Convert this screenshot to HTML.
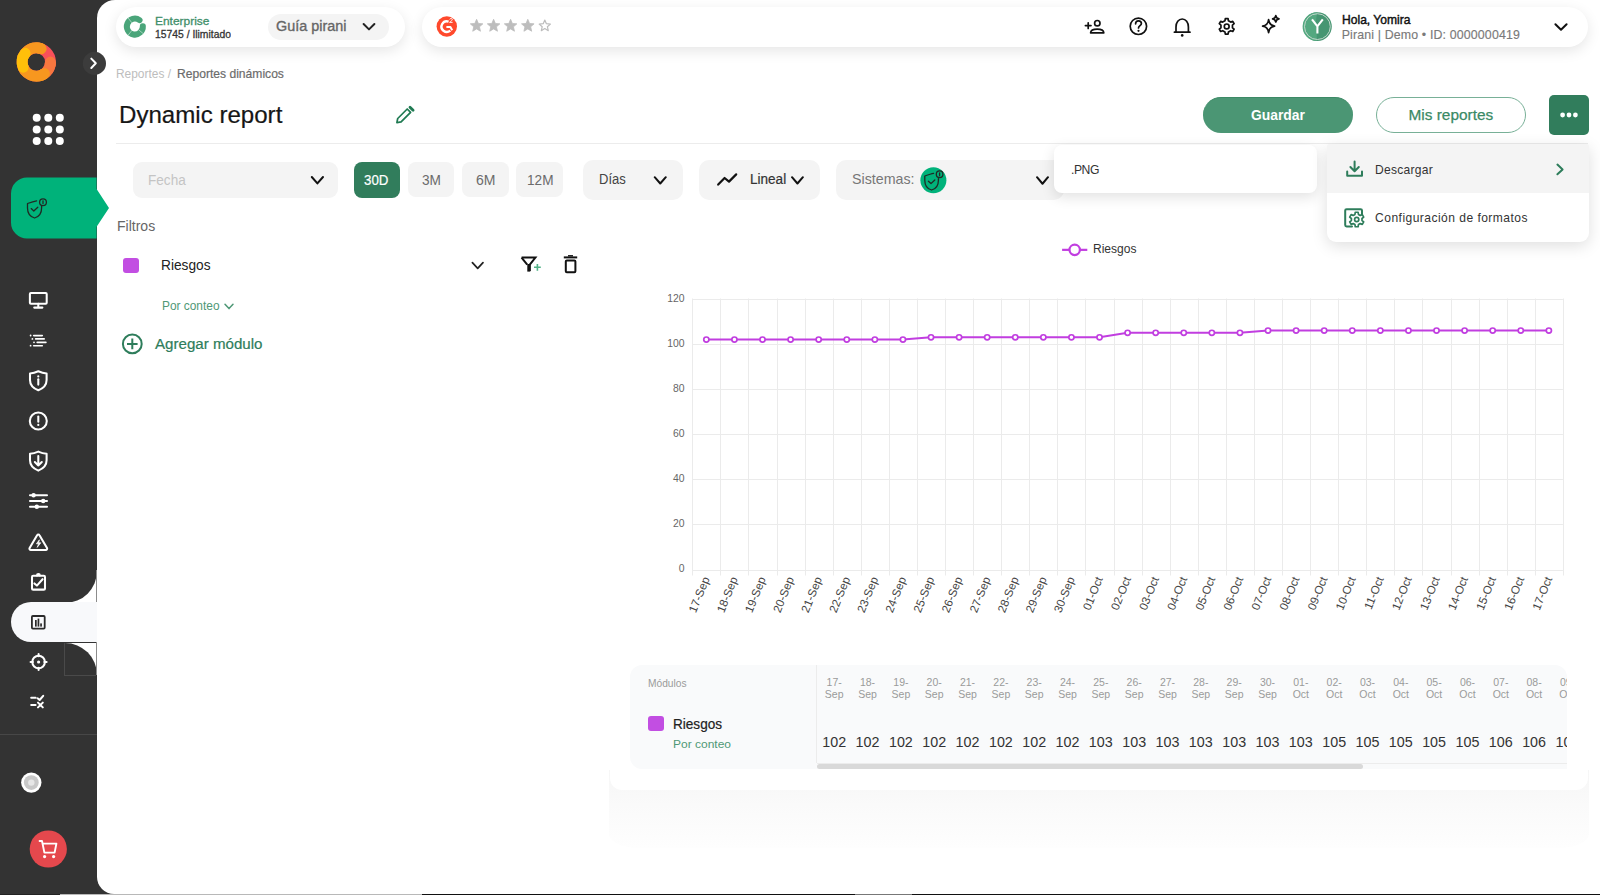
<!DOCTYPE html>
<html><head><meta charset="utf-8">
<style>
*{box-sizing:border-box;margin:0;padding:0}
html,body{width:1600px;height:895px;overflow:hidden;background:#333333;font-family:"Liberation Sans",sans-serif;position:relative}
.a{position:absolute}
.t{position:absolute;white-space:nowrap;transform-origin:0 50%}
svg{position:absolute;overflow:visible}
</style></head><body>
<div class="a" style="left:0;top:0;width:97px;height:895px;background:#333333"></div>
<div class="a" style="left:97px;top:0;width:1503px;height:894px;background:#fff;border-radius:18px 0 0 17px"></div>
<div class="a" style="left:0;top:894px;width:60px;height:1px;background:#222"></div>
<div class="a" style="left:60px;top:894px;width:362px;height:1px;background:#b8b8b8"></div>
<div class="a" style="left:422px;top:894px;width:1178px;height:1px;background:#111"></div>
<div class="a" style="left:855px;top:894px;width:57px;height:1px;background:#777"></div>
<svg style="left:0;top:0" width="97" height="160">
<circle cx="36.3" cy="62" r="14.15" fill="none" stroke="#f9505a" stroke-width="10.9"/>
<path d="M50.45 62.00 A14.15 14.15 0 0 1 41.14 75.30" fill="none" stroke="#f8773f" stroke-width="10.9" stroke-linecap="butt"/>
<path d="M50.45 62.00 A14.15 14.15 0 0 1 50.24 64.46" fill="none" stroke="#f8773f" stroke-width="10.9" stroke-linecap="round"/>
<path d="M44.42 73.59 A14.15 14.15 0 1 1 41.14 48.70" fill="none" stroke="#f7971f" stroke-width="10.9" stroke-linecap="butt"/>
<path d="M44.42 73.59 A14.15 14.15 0 0 1 41.14 75.30" fill="none" stroke="#f7971f" stroke-width="10.9" stroke-linecap="round"/>
<path d="M37.53 47.90 A14.15 14.15 0 0 1 41.14 48.70" fill="none" stroke="#f7971f" stroke-width="10.9" stroke-linecap="round"/>
<path d="M23.18 67.30 A14.15 14.15 0 0 1 25.15 53.29" fill="none" stroke="#ffbf0a" stroke-width="10.9" stroke-linecap="round"/>
</svg>
<svg style="left:0;top:0" width="97" height="160"><circle cx="36.7" cy="117.8" r="4" fill="#fff"/><circle cx="48.3" cy="117.8" r="4" fill="#fff"/><circle cx="59.8" cy="117.8" r="4" fill="#fff"/><circle cx="36.7" cy="129.4" r="4" fill="#fff"/><circle cx="48.3" cy="129.4" r="4" fill="#fff"/><circle cx="59.8" cy="129.4" r="4" fill="#fff"/><circle cx="36.7" cy="141" r="4" fill="#fff"/><circle cx="48.3" cy="141" r="4" fill="#fff"/><circle cx="59.8" cy="141" r="4" fill="#fff"/></svg>
<svg style="left:0;top:0" width="120" height="100">
<circle cx="94.4" cy="63.4" r="11.6" fill="#3c3c3c"/>
<path d="M91.3 58.6 L95.8 63.3 L91.3 68" fill="none" stroke="#fff" stroke-width="2" stroke-linecap="round" stroke-linejoin="round"/>
</svg>
<svg style="left:0;top:170px" width="120" height="80">
<path d="M27 7.6 H96.6 V19 L109 38 L96.6 56.8 V68.4 H27 A16 16 0 0 1 11 52.4 V23.6 A16 16 0 0 1 27 7.6 Z" fill="#00b27a"/>
<g fill="none" stroke="#1f2a24" stroke-width="1.3" stroke-linecap="round" stroke-linejoin="round">
<path d="M36.6 200.8 C34 201.2 31.5 202 27.5 203.5 V208 C27.5 213.5 30.5 216.8 34.6 218 C38.6 216.8 41.6 213.5 41.6 208 V205.8" transform="translate(0,-170)"/>
<path d="M31.2 208.6 L33.8 211 L37.8 207.3" transform="translate(0,-170)"/>
<circle cx="43" cy="32.2" r="3.4"/>
<path d="M43 30.8 V33.6"/>
</g>
</svg>
<svg style="left:0;top:0" width="97" height="895"><g fill="none" stroke="#fff" stroke-width="2.05" stroke-linecap="round" stroke-linejoin="round">
<rect x="29.9" y="292.9" width="16.8" height="10.8" rx="1"/>
<path d="M38.3 303.8 V307.6 M34.2 307.6 H42.4"/>
</g>
<g fill="#fff">
<rect x="32.9" y="334.7" width="10.2" height="1.7" rx=".8"/><rect x="34.8" y="338.1" width="10.2" height="1.7" rx=".8"/>
<rect x="36.4" y="341.5" width="10.3" height="1.7" rx=".8"/><rect x="32.9" y="344.9" width="10.2" height="1.7" rx=".8"/>
<circle cx="30.6" cy="335.5" r=".9"/><circle cx="32.4" cy="338.9" r=".9"/><circle cx="34" cy="342.3" r=".9"/><circle cx="30.6" cy="345.7" r=".9"/>
</g>
<g fill="none" stroke="#fff" stroke-width="2.05" stroke-linecap="round" stroke-linejoin="round">
<path d="M38.3 371.3 C35.5 372.5 32.8 373.2 30 373.4 V380 C30 385 33.2 388.3 38.3 390.3 C43.4 388.3 46.6 385 46.6 380 V373.4 C43.8 373.2 41.1 372.5 38.3 371.3 Z"/>
<path d="M38.3 379.2 V384.6"/>
</g>
<circle cx="38.3" cy="376.4" r="1.1" fill="#fff"/>
<g fill="none" stroke="#fff" stroke-width="2.05" stroke-linecap="round" stroke-linejoin="round">
<circle cx="38.3" cy="421" r="8.5"/>
<path d="M38.3 416.5 V421.8"/>
</g>
<circle cx="38.3" cy="424.9" r="1.1" fill="#fff"/>
<g fill="none" stroke="#fff" stroke-width="2.05" stroke-linecap="round" stroke-linejoin="round">
<path d="M38.3 451.6 C35.5 452.8 32.8 453.5 30 453.7 V460.3 C30 465.3 33.2 468.6 38.3 470.6 C43.4 468.6 46.6 465.3 46.6 460.3 V453.7 C43.8 453.5 41.1 452.8 38.3 451.6 Z"/>
<path d="M38.3 456 V465.5 M34.8 462 L38.3 465.5 L41.8 462"/>
</g>
<g fill="none" stroke="#fff" stroke-width="2.05" stroke-linecap="round" stroke-linejoin="round">
<path d="M30 495.3 H47 M30 501 H47 M30 506.7 H47"/>
</g>
<g fill="#fff"><circle cx="33.6" cy="495.3" r="2.2"/><circle cx="43.2" cy="501" r="2.2"/><circle cx="36.8" cy="506.7" r="2.2"/></g>
<g fill="none" stroke="#fff" stroke-width="2.05" stroke-linecap="round" stroke-linejoin="round">
<path d="M37.1 535.2 C37.6 534.3 39 534.3 39.5 535.2 L47 548 C47.5 548.9 46.9 550 45.8 550 H30.8 C29.7 550 29.1 548.9 29.6 548 Z"/>
</g>
<path d="M39.4 539.8 L36.4 543.8 H38.6 L37.2 547.4 L40.8 542.8 H38.6 Z" fill="#fff" stroke="#fff" stroke-width="0.7" stroke-linejoin="round"/>
<g fill="none" stroke="#fff" stroke-width="2.05" stroke-linecap="round" stroke-linejoin="round">
<rect x="32" y="575.8" width="13" height="13.8" rx="1.2"/>
<path d="M34.4 583.4 L36.9 585.6 L42.6 579.2"/>
<path d="M37 575.4 A1.4 1.4 0 0 1 39.8 575.4"/>
</g>
</svg>
<div class="a" style="left:64px;top:570px;width:33px;height:33px;background:#fff"></div>
<div class="a" style="left:64px;top:570px;width:33px;height:33px;background:#333;border-bottom-right-radius:32px"></div>
<div class="a" style="left:64px;top:643px;width:33px;height:33px;background:#fff"></div>
<div class="a" style="left:64px;top:643px;width:33px;height:33px;background:#333;border-top-right-radius:32px"></div>
<div class="a" style="left:11px;top:602.2px;width:86px;height:40.2px;background:#f8f9fb;border-radius:20.25px 0 0 20.25px"></div>
<div class="a" style="left:96px;top:570px;width:1px;height:32px;background:#8c8c8c"></div>
<div class="a" style="left:96px;top:642.4px;width:1px;height:33px;background:#8c8c8c"></div>
<div class="a" style="left:64px;top:643px;width:1px;height:32px;background:#4a4a4a"></div>
<div class="a" style="left:64px;top:674.5px;width:32px;height:1px;background:#4a4a4a"></div>
<svg style="left:0;top:0" width="97" height="895">
<g fill="none" stroke="#2a2a2a" stroke-width="1.8" stroke-linejoin="round">
<rect x="31.9" y="616" width="12.8" height="12.6" rx="1"/>
</g>
<g fill="#2a2a2a"><rect x="35" y="620" width="1.7" height="6.6"/><rect x="37.6" y="618.6" width="1.7" height="8"/><rect x="40.2" y="623.4" width="1.7" height="3.2"/></g>
<g fill="none" stroke="#fff" stroke-width="2.05" stroke-linecap="round" stroke-linejoin="round">
<circle cx="38.6" cy="662" r="6.3"/>
<path d="M38.6 654 V656.3 M38.6 667.7 V670 M30.6 662 H32.9 M44.3 662 H46.6"/>
</g>
<circle cx="38.6" cy="662" r="1.6" fill="#fff"/>
<g fill="none" stroke="#fff" stroke-width="2.05" stroke-linecap="round" stroke-linejoin="round">
<path d="M31.2 697.8 H35.6 M31.2 705 H35.6 M37.6 698.3 L39.6 700 L43.2 695.8 M38 702.6 L42.8 707.4 M42.8 702.6 L38 707.4"/>
</g>
<path d="M0 734.5 H97" stroke="#474747" stroke-width="1"/>
<circle cx="31.3" cy="782.6" r="10.2" fill="#fff"/>
<circle cx="31.3" cy="782.6" r="7.4" fill="#c8c8c8"/>
<circle cx="31.3" cy="782.6" r="3.2" fill="#e6e6e6"/>
<circle cx="48.3" cy="849" r="18.6" fill="#e5484d"/>
<g fill="none" stroke="#fff" stroke-width="1.9" stroke-linecap="round" stroke-linejoin="round">
<path d="M39.6 841 H42 L44.4 852.6 H54.6 L56.4 843.6 H43"/>
</g>
<circle cx="44.6" cy="856.6" r="1.6" fill="#fff"/><circle cx="53.6" cy="856.6" r="1.6" fill="#fff"/>
</svg>
<div class="a" style="left:116px;top:7px;width:289px;height:40px;background:#fff;border-radius:20px;box-shadow:0 4px 14px rgba(0,0,0,0.10)"></div>
<div class="a" style="left:422px;top:7px;width:1166px;height:40px;background:#fff;border-radius:20px;box-shadow:0 4px 14px rgba(0,0,0,0.10)"></div>
<svg style="left:0;top:0" width="200" height="60">
<path d="M142.84 26.18 A8.0 8.0 0 1 1 139.55 20.13" fill="none" stroke="#4aa57a" stroke-width="6" stroke-linecap="round"/>
<path d="M131.83 22.74 L128.02 17.85 M131.83 30.46 L128.02 35.35 M138.60 29.75 L143.35 33.73" stroke="#d8ece2" stroke-width="0.6"/>
</svg>
<div class="t" style="left:154.50px;top:14.75px;font-size:11.627906976744187px;line-height:11.627906976744187px;color:#3f8f6a;transform:scaleX(1.0283);-webkit-text-stroke:0.3px #3f8f6a;">Enterprise</div>
<div class="t" style="left:154.50px;top:28.84px;font-size:11.046511627906977px;line-height:11.046511627906977px;color:#333;transform:scaleX(0.9376);-webkit-text-stroke:0.3px #333;">15745 / Ilimitado</div>
<div class="a" style="left:268px;top:14px;width:121px;height:26px;background:#f4f4f4;border-radius:13px"></div>
<div class="t" style="left:276.00px;top:18.69px;font-size:14.534883720930234px;line-height:14.534883720930234px;color:#666;transform:scaleX(0.9915);-webkit-text-stroke:0.35px #666;">Guía pirani</div>
<svg style="left:0;top:0" width="400" height="60"><path d="M363.6 24 L369 29.4 L374.4 24" fill="none" stroke="#222" stroke-width="2" stroke-linecap="round" stroke-linejoin="round"/></svg>
<svg style="left:0;top:0" width="600" height="60">
<circle cx="446.8" cy="26.5" r="10.2" fill="#ff492c"/>
<path d="M448.6 21.6 A5.3 5.3 0 1 0 450.3 30.6" fill="none" stroke="#fff" stroke-width="2.4"/>
<path d="M446.4 26.9 H450.4 L452.2 30.2" fill="none" stroke="#fff" stroke-width="2" stroke-linejoin="round"/>
<path d="M449.6 19.4 C449.8 18.3 452.4 18.3 452.4 19.6 C452.4 20.6 450.2 21.2 449.6 22.4 H452.6" fill="none" stroke="#fff" stroke-width="0.9"/>
</svg>
<svg style="left:0;top:0" width="600" height="60"><path d="M476.60,19.30 L478.36,23.47 L482.88,23.86 L479.45,26.83 L480.48,31.24 L476.60,28.90 L472.72,31.24 L473.75,26.83 L470.32,23.86 L474.84,23.47 Z" fill="#bdbdbd" stroke="#bdbdbd" stroke-width="0.8" stroke-linejoin="round"/><path d="M493.60,19.30 L495.36,23.47 L499.88,23.86 L496.45,26.83 L497.48,31.24 L493.60,28.90 L489.72,31.24 L490.75,26.83 L487.32,23.86 L491.84,23.47 Z" fill="#bdbdbd" stroke="#bdbdbd" stroke-width="0.8" stroke-linejoin="round"/><path d="M510.60,19.30 L512.36,23.47 L516.88,23.86 L513.45,26.83 L514.48,31.24 L510.60,28.90 L506.72,31.24 L507.75,26.83 L504.32,23.86 L508.84,23.47 Z" fill="#bdbdbd" stroke="#bdbdbd" stroke-width="0.8" stroke-linejoin="round"/><path d="M527.80,19.30 L529.56,23.47 L534.08,23.86 L530.65,26.83 L531.68,31.24 L527.80,28.90 L523.92,31.24 L524.95,26.83 L521.52,23.86 L526.04,23.47 Z" fill="#bdbdbd" stroke="#bdbdbd" stroke-width="0.8" stroke-linejoin="round"/><path d="M544.80,20.00 L546.39,23.72 L550.41,24.08 L547.37,26.73 L548.27,30.67 L544.80,28.60 L541.33,30.67 L542.23,26.73 L539.19,24.08 L543.21,23.72 Z" fill="none" stroke="#bdbdbd" stroke-width="1.2" stroke-linejoin="round"/></svg>
<svg style="left:0;top:0" width="1600" height="60"><g fill="none" stroke="#111" stroke-width="1.7" stroke-linecap="round" stroke-linejoin="round">
<path d="M1085.4 25.6 H1091 M1088.2 22.8 V28.4"/>
<circle cx="1097.3" cy="23.2" r="2.7"/>
<path d="M1090.6 32.8 C1090.8 30.4 1093.6 29.2 1097.2 29.2 C1100.8 29.2 1103.6 30.4 1103.8 32.8 Z"/>
<circle cx="1138.4" cy="26.3" r="8.2"/>
<path d="M1135.6 23.8 C1135.6 21.8 1137 20.8 1138.5 20.8 C1140.2 20.8 1141.4 22 1141.4 23.5 C1141.4 25.6 1138.5 25.8 1138.5 28"/>
<path d="M1176 32.2 V27 C1176 22.4 1178.6 19 1182.2 19 C1185.8 19 1188.4 22.4 1188.4 27 V32.2 Z M1174.4 32.2 H1190"/>
</g>
<circle cx="1138.5" cy="30.8" r="1.1" fill="#111"/>
<circle cx="1182.2" cy="35.4" r="1.3" fill="#111"/>
<g fill="none" stroke="#111" stroke-width="1.7" stroke-linecap="round" stroke-linejoin="round">
<path d=""/>
</g>
</svg>
<svg style="left:0;top:0" width="1600" height="60"><g fill="none" stroke="#111" stroke-width="1.7" stroke-linecap="round" stroke-linejoin="round" stroke-width="1.9">
<path d="M1224.98,20.76 L1225.33,18.62 L1228.07,18.62 L1228.42,20.76 L1230.72,22.09 L1232.75,21.32 L1234.12,23.70 L1232.45,25.07 L1232.45,27.73 L1234.12,29.10 L1232.75,31.48 L1230.72,30.71 L1228.42,32.04 L1228.07,34.18 L1225.33,34.18 L1224.98,32.04 L1222.68,30.71 L1220.65,31.48 L1219.28,29.10 L1220.95,27.73 L1220.95,25.07 L1219.28,23.70 L1220.65,21.32 L1222.68,22.09 Z"/>
<circle cx="1226.7" cy="26.4" r="2.4"/>
<path d="M1268.6 19.5 Q1269.1999999999998 25.44 1274.6 26.1 Q1269.1999999999998 26.76 1268.6 32.7 Q1268.0 26.76 1262.6 26.1 Q1268.0 25.44 1268.6 19.5 Z"/>
<path d="M1275.8 15.600000000000001 Q1276.28 18.32 1279.0 18.8 Q1276.28 19.28 1275.8 22.0 Q1275.32 19.28 1272.6 18.8 Q1275.32 18.32 1275.8 15.600000000000001 Z"/>
</g></svg>
<svg style="left:0;top:0" width="1600" height="60">
<circle cx="1317.4" cy="26.6" r="14.4" fill="#469672"/>
<path d="M1317.4 12.2 C1316 18 1315.4 24 1316.4 30 C1316.8 34 1317 38 1316.6 41 A14.4 14.4 0 0 1 1317.4 12.2 Z" fill="#54a880"/>
<circle cx="1317.4" cy="26.6" r="12.9" fill="none" stroke="#cfdcd5" stroke-width="0.9"/>
<path d="M1312 19.4 L1317.4 26.4 L1322.8 19.4 M1317.4 26.4 V33.5" fill="none" stroke="#fff" stroke-width="2.1"/>
</svg>
<div class="t" style="left:1341.70px;top:13.67px;font-size:12.790697674418606px;line-height:12.790697674418606px;color:#111;transform:scaleX(0.9457);-webkit-text-stroke:0.45px #111;">Hola, Yomira</div>
<div class="t" style="left:1341.70px;top:29.34px;font-size:12.354651162790699px;line-height:12.354651162790699px;color:#7a7a7a;letter-spacing:0.157px;-webkit-text-stroke:0.15px #7a7a7a;">Pirani | Demo • ID: 0000000419</div>
<svg style="left:0;top:0" width="1600" height="60"><path d="M1555.4 24.2 L1561 29.8 L1566.6 24.2" fill="none" stroke="#111" stroke-width="2" stroke-linecap="round" stroke-linejoin="round"/></svg>
<div class="t" style="left:116.00px;top:68.27px;font-size:12.790697674418606px;line-height:12.790697674418606px;color:#bdbdbd;transform:scaleX(0.9321);">Reportes /</div>
<div class="t" style="left:177.00px;top:68.27px;font-size:12.790697674418606px;line-height:12.790697674418606px;color:#6b6b6b;transform:scaleX(0.9466);-webkit-text-stroke:0.2px #6b6b6b;">Reportes dinámicos</div>
<div class="t" style="left:119.00px;top:102.81px;font-size:23.837209302325583px;line-height:23.837209302325583px;color:#161616;transform:scaleX(1.0110);-webkit-text-stroke:0.2px #161616;">Dynamic report</div>
<svg style="left:0;top:0" width="1600" height="200">
<path d="M396.9 122.7 L397.7 118.5 L407.2 109 L410.6 112.4 L401.1 121.9 Z" fill="none" stroke="#1f7a52" stroke-width="1.7" stroke-linejoin="round"/>
<path d="M410 107.2 L413.1 110.3" stroke="#1f7a52" stroke-width="2.8" stroke-linecap="round"/>
</svg>
<div class="a" style="left:116px;top:142.5px;width:1472px;height:1px;background:#ececec"></div>
<div class="a" style="left:1202.75px;top:96.9px;width:150px;height:36.2px;background:#4b9674;border-radius:18.1px;border-top:1px solid #3d8a66"></div>
<div class="t" style="left:1251.00px;top:107.89px;font-size:14.534883720930234px;line-height:14.534883720930234px;color:#fff;font-weight:700;transform:scaleX(0.9551);">Guardar</div>
<div class="a" style="left:1376px;top:97.2px;width:150px;height:36px;background:#fff;border-radius:18px;border:1px solid #78b097"></div>
<div class="t" style="left:1408.50px;top:106.95px;font-size:15.406976744186046px;line-height:15.406976744186046px;color:#3a8a65;-webkit-text-stroke:0.25px #3a8a65;">Mis reportes</div>
<div class="a" style="left:1549px;top:95px;width:39.5px;height:39.6px;background:#317d5c;border-radius:5px"></div>
<svg style="left:0;top:0" width="1600" height="200"><g fill="#fff"><circle cx="1562.6" cy="115" r="2.4"/><circle cx="1569" cy="115" r="2.4"/><circle cx="1575.4" cy="115" r="2.4"/></g></svg>
<div class="a" style="left:132.6px;top:162.1px;width:205.6px;height:35.8px;background:#f4f4f4;border-radius:9px"></div>
<div class="t" style="left:148.40px;top:172.89px;font-size:14.534883720930234px;line-height:14.534883720930234px;color:#c4c4c4;transform:scaleX(0.9355);">Fecha</div>
<div class="a" style="left:353.9px;top:162.2px;width:46px;height:35.4px;background:#317d5c;border-radius:8px"></div>
<div class="t" style="left:364.40px;top:173.24px;font-size:14.24418604651163px;line-height:14.24418604651163px;color:#fff;transform:scaleX(0.9340);-webkit-text-stroke:0.2px #fff;">30D</div>
<div class="a" style="left:408.2px;top:162.2px;width:45.60000000000002px;height:35.2px;background:#f4f4f4;border-radius:8px"></div>
<div class="t" style="left:421.50px;top:173.24px;font-size:14.24418604651163px;line-height:14.24418604651163px;color:#6b6b6b;transform:scaleX(0.9603);">3M</div>
<div class="a" style="left:462.1px;top:162.2px;width:46.5px;height:35.2px;background:#f4f4f4;border-radius:8px"></div>
<div class="t" style="left:475.80px;top:173.24px;font-size:14.24418604651163px;line-height:14.24418604651163px;color:#6b6b6b;transform:scaleX(0.9856);">6M</div>
<div class="a" style="left:516.3px;top:162.2px;width:46.5px;height:35.2px;background:#f4f4f4;border-radius:8px"></div>
<div class="t" style="left:526.50px;top:173.24px;font-size:14.24418604651163px;line-height:14.24418604651163px;color:#6b6b6b;transform:scaleX(0.9565);">12M</div>
<div class="a" style="left:583px;top:160.4px;width:100.4px;height:39.8px;background:#f4f4f4;border-radius:10px"></div>
<div class="t" style="left:599.20px;top:171.69px;font-size:14.534883720930234px;line-height:14.534883720930234px;color:#444;transform:scaleX(0.8968);">Días</div>
<div class="a" style="left:699.3px;top:160.4px;width:120.3px;height:39.8px;background:#f4f4f4;border-radius:10px"></div>
<div class="t" style="left:750.00px;top:171.69px;font-size:14.534883720930234px;line-height:14.534883720930234px;color:#333;transform:scaleX(0.9331);-webkit-text-stroke:0.2px #333;">Lineal</div>
<div class="a" style="left:836.25px;top:159.5px;width:228px;height:40.3px;background:#f4f4f4;border-radius:10px"></div>
<div class="t" style="left:851.90px;top:171.40px;font-size:15.116279069767444px;line-height:15.116279069767444px;color:#777;transform:scaleX(0.9418);">Sistemas:</div>
<svg style="left:0;top:0" width="1600" height="300">
<path d="M311.8 177 L317.4 183.4 L323 177" fill="none" stroke="#111" stroke-width="2" stroke-linecap="round" stroke-linejoin="round"/>
<path d="M654.7 177.2 L660.25 183.5 L665.8 177.2" fill="none" stroke="#111" stroke-width="2" stroke-linecap="round" stroke-linejoin="round"/>
<path d="M792 177.2 L797.45 183.5 L802.9 177.2" fill="none" stroke="#111" stroke-width="2" stroke-linecap="round" stroke-linejoin="round"/>
<path d="M1037 177.2 L1042.5 183.75 L1048 177.2" fill="none" stroke="#111" stroke-width="2" stroke-linecap="round" stroke-linejoin="round"/>
<path d="M718.2 184.6 L724.6 178 L729 181.6 L736.2 174.4" fill="none" stroke="#111" stroke-width="2.2" stroke-linecap="round" stroke-linejoin="round"/>
<circle cx="933.4" cy="180.2" r="13" fill="#00b27a"/>
<g fill="none" stroke="#1f2a24" stroke-width="1.3" stroke-linecap="round" stroke-linejoin="round">
<path d="M933.6 173.4 C931.2 173.8 928.8 174.6 924.8 176 V180.4 C924.8 185.6 927.6 188.8 931.6 190 C935.6 188.8 938.4 185.6 938.4 180.4 V178.6"/>
<path d="M928.4 181.2 L931 183.6 L934.8 180"/>
<circle cx="939.6" cy="174.2" r="3.3"/>
<path d="M939.6 172.9 V175.5"/>
</g>
</svg>
<div class="t" style="left:117.00px;top:220.30px;font-size:13.808139534883722px;line-height:13.808139534883722px;color:#666;transform:scaleX(1.0163);">Filtros</div>
<div class="a" style="left:123px;top:257.7px;width:15.8px;height:15.6px;background:#c24ee2;border-radius:3px"></div>
<div class="t" style="left:160.60px;top:257.56px;font-size:14.098837209302326px;line-height:14.098837209302326px;color:#222;transform:scaleX(0.9737);">Riesgos</div>
<div class="t" style="left:161.60px;top:299.79px;font-size:12.645348837209303px;line-height:12.645348837209303px;color:#4f9876;transform:scaleX(0.9419);">Por conteo</div>
<svg style="left:0;top:0" width="700" height="400">
<path d="M472.4 262.6 L477.7 268.4 L483 262.6" fill="none" stroke="#222" stroke-width="1.7" stroke-linecap="round" stroke-linejoin="round"/>
<path d="M225 304.2 L229.0 308.6 L233 304.2" fill="none" stroke="#4f9876" stroke-width="1.5" stroke-linecap="round" stroke-linejoin="round"/>
<path d="M521.6 257.6 H535.4 L529.8 264.6 V271" fill="none" stroke="#111" stroke-width="2" stroke-linejoin="miter"/>
<path d="M521.6 257.6 L527.2 264.6" fill="none" stroke="#111" stroke-width="2"/>
<rect x="527.3" y="264" width="3" height="7.6" fill="#111"/>
<path d="M534 267.3 H540.8 M537.4 263.9 V270.7" stroke="#52b287" stroke-width="1.6"/>
<path d="M563.8 257.4 H577.2" stroke="#111" stroke-width="2"/>
<path d="M568 255.8 H573" stroke="#111" stroke-width="1.4"/>
<rect x="565.8" y="260.6" width="9.6" height="11.6" rx="1" fill="none" stroke="#111" stroke-width="2"/>
<circle cx="132.3" cy="343.9" r="9.4" fill="none" stroke="#2e7d5b" stroke-width="2"/>
<path d="M132.3 338.6 V349.2 M127 343.9 H137.6" stroke="#2e7d5b" stroke-width="2"/>
</svg>
<div class="t" style="left:154.90px;top:335.77px;font-size:15.261627906976745px;line-height:15.261627906976745px;color:#2e7d5b;transform:scaleX(0.9909);-webkit-text-stroke:0.2px #2e7d5b;">Agregar módulo</div>
<div class="a" style="left:609px;top:770px;width:980px;height:78px;background:linear-gradient(#f6f6f6,#fafafa 45%,#fefefe);border-radius:0 0 30px 30px/0 0 14px 14px"></div>
<div class="a" style="left:610px;top:218px;width:978px;height:572px;background:#fff;border-radius:12px"></div>
<svg style="left:0;top:0" width="1600" height="700" font-family="Liberation Sans">
<g stroke="#ebebeb" stroke-width="1"><path d="M692.3 570.5 H1562.9"/><path d="M692.3 524.5 H1562.9"/><path d="M692.3 479.5 H1562.9"/><path d="M692.3 434.5 H1562.9"/><path d="M692.3 389.5 H1562.9"/><path d="M692.3 344.5 H1562.9"/><path d="M692.3 299.5 H1562.9"/><path d="M692.5 298.5 V575.5"/><path d="M720.5 298.5 V575.5"/><path d="M748.5 298.5 V575.5"/><path d="M777.5 298.5 V575.5"/><path d="M805.5 298.5 V575.5"/><path d="M833.5 298.5 V575.5"/><path d="M861.5 298.5 V575.5"/><path d="M889.5 298.5 V575.5"/><path d="M917.5 298.5 V575.5"/><path d="M945.5 298.5 V575.5"/><path d="M973.5 298.5 V575.5"/><path d="M1001.5 298.5 V575.5"/><path d="M1029.5 298.5 V575.5"/><path d="M1057.5 298.5 V575.5"/><path d="M1085.5 298.5 V575.5"/><path d="M1114.5 298.5 V575.5"/><path d="M1142.5 298.5 V575.5"/><path d="M1170.5 298.5 V575.5"/><path d="M1198.5 298.5 V575.5"/><path d="M1226.5 298.5 V575.5"/><path d="M1254.5 298.5 V575.5"/><path d="M1282.5 298.5 V575.5"/><path d="M1310.5 298.5 V575.5"/><path d="M1338.5 298.5 V575.5"/><path d="M1366.5 298.5 V575.5"/><path d="M1394.5 298.5 V575.5"/><path d="M1422.5 298.5 V575.5"/><path d="M1451.5 298.5 V575.5"/><path d="M1479.5 298.5 V575.5"/><path d="M1507.5 298.5 V575.5"/><path d="M1535.5 298.5 V575.5"/><path d="M1563.5 298.5 V575.5"/></g><text x="684.5" y="572.1" text-anchor="end" font-size="10.4" fill="#666">0</text><text x="684.5" y="527.0" text-anchor="end" font-size="10.4" fill="#666">20</text><text x="684.5" y="481.9" text-anchor="end" font-size="10.4" fill="#666">40</text><text x="684.5" y="436.9" text-anchor="end" font-size="10.4" fill="#666">60</text><text x="684.5" y="391.8" text-anchor="end" font-size="10.4" fill="#666">80</text><text x="684.5" y="346.7" text-anchor="end" font-size="10.4" fill="#666">100</text><text x="684.5" y="301.6" text-anchor="end" font-size="10.4" fill="#666">120</text><text transform="translate(707.0,577.6) rotate(-68)" text-anchor="end" dominant-baseline="middle" font-size="11.6" fill="#444">17-Sep</text><text transform="translate(735.1,577.6) rotate(-68)" text-anchor="end" dominant-baseline="middle" font-size="11.6" fill="#444">18-Sep</text><text transform="translate(763.2,577.6) rotate(-68)" text-anchor="end" dominant-baseline="middle" font-size="11.6" fill="#444">19-Sep</text><text transform="translate(791.3,577.6) rotate(-68)" text-anchor="end" dominant-baseline="middle" font-size="11.6" fill="#444">20-Sep</text><text transform="translate(819.4,577.6) rotate(-68)" text-anchor="end" dominant-baseline="middle" font-size="11.6" fill="#444">21-Sep</text><text transform="translate(847.5,577.6) rotate(-68)" text-anchor="end" dominant-baseline="middle" font-size="11.6" fill="#444">22-Sep</text><text transform="translate(875.5,577.6) rotate(-68)" text-anchor="end" dominant-baseline="middle" font-size="11.6" fill="#444">23-Sep</text><text transform="translate(903.6,577.6) rotate(-68)" text-anchor="end" dominant-baseline="middle" font-size="11.6" fill="#444">24-Sep</text><text transform="translate(931.7,577.6) rotate(-68)" text-anchor="end" dominant-baseline="middle" font-size="11.6" fill="#444">25-Sep</text><text transform="translate(959.8,577.6) rotate(-68)" text-anchor="end" dominant-baseline="middle" font-size="11.6" fill="#444">26-Sep</text><text transform="translate(987.9,577.6) rotate(-68)" text-anchor="end" dominant-baseline="middle" font-size="11.6" fill="#444">27-Sep</text><text transform="translate(1016.0,577.6) rotate(-68)" text-anchor="end" dominant-baseline="middle" font-size="11.6" fill="#444">28-Sep</text><text transform="translate(1044.0,577.6) rotate(-68)" text-anchor="end" dominant-baseline="middle" font-size="11.6" fill="#444">29-Sep</text><text transform="translate(1072.1,577.6) rotate(-68)" text-anchor="end" dominant-baseline="middle" font-size="11.6" fill="#444">30-Sep</text><text transform="translate(1100.2,577.6) rotate(-68)" text-anchor="end" dominant-baseline="middle" font-size="11.6" fill="#444">01-Oct</text><text transform="translate(1128.3,577.6) rotate(-68)" text-anchor="end" dominant-baseline="middle" font-size="11.6" fill="#444">02-Oct</text><text transform="translate(1156.4,577.6) rotate(-68)" text-anchor="end" dominant-baseline="middle" font-size="11.6" fill="#444">03-Oct</text><text transform="translate(1184.5,577.6) rotate(-68)" text-anchor="end" dominant-baseline="middle" font-size="11.6" fill="#444">04-Oct</text><text transform="translate(1212.6,577.6) rotate(-68)" text-anchor="end" dominant-baseline="middle" font-size="11.6" fill="#444">05-Oct</text><text transform="translate(1240.6,577.6) rotate(-68)" text-anchor="end" dominant-baseline="middle" font-size="11.6" fill="#444">06-Oct</text><text transform="translate(1268.7,577.6) rotate(-68)" text-anchor="end" dominant-baseline="middle" font-size="11.6" fill="#444">07-Oct</text><text transform="translate(1296.8,577.6) rotate(-68)" text-anchor="end" dominant-baseline="middle" font-size="11.6" fill="#444">08-Oct</text><text transform="translate(1324.9,577.6) rotate(-68)" text-anchor="end" dominant-baseline="middle" font-size="11.6" fill="#444">09-Oct</text><text transform="translate(1353.0,577.6) rotate(-68)" text-anchor="end" dominant-baseline="middle" font-size="11.6" fill="#444">10-Oct</text><text transform="translate(1381.1,577.6) rotate(-68)" text-anchor="end" dominant-baseline="middle" font-size="11.6" fill="#444">11-Oct</text><text transform="translate(1409.1,577.6) rotate(-68)" text-anchor="end" dominant-baseline="middle" font-size="11.6" fill="#444">12-Oct</text><text transform="translate(1437.2,577.6) rotate(-68)" text-anchor="end" dominant-baseline="middle" font-size="11.6" fill="#444">13-Oct</text><text transform="translate(1465.3,577.6) rotate(-68)" text-anchor="end" dominant-baseline="middle" font-size="11.6" fill="#444">14-Oct</text><text transform="translate(1493.4,577.6) rotate(-68)" text-anchor="end" dominant-baseline="middle" font-size="11.6" fill="#444">15-Oct</text><text transform="translate(1521.5,577.6) rotate(-68)" text-anchor="end" dominant-baseline="middle" font-size="11.6" fill="#444">16-Oct</text><text transform="translate(1549.6,577.6) rotate(-68)" text-anchor="end" dominant-baseline="middle" font-size="11.6" fill="#444">17-Oct</text>
<polyline points="706.34,339.59 734.43,339.59 762.51,339.59 790.59,339.59 818.68,339.59 846.76,339.59 874.85,339.59 902.93,339.59 931.01,337.34 959.10,337.34 987.18,337.34 1015.26,337.34 1043.35,337.34 1071.43,337.34 1099.52,337.34 1127.60,332.83 1155.68,332.83 1183.77,332.83 1211.85,332.83 1239.94,332.83 1268.02,330.58 1296.10,330.58 1324.19,330.58 1352.27,330.58 1380.35,330.58 1408.44,330.58 1436.52,330.58 1464.61,330.58 1492.69,330.58 1520.77,330.58 1548.86,330.58" fill="none" stroke="#c13ee0" stroke-width="2"/>
<circle cx="706.34" cy="339.59" r="2.6" fill="#fff" stroke="#c13ee0" stroke-width="1.7"/><circle cx="734.43" cy="339.59" r="2.6" fill="#fff" stroke="#c13ee0" stroke-width="1.7"/><circle cx="762.51" cy="339.59" r="2.6" fill="#fff" stroke="#c13ee0" stroke-width="1.7"/><circle cx="790.59" cy="339.59" r="2.6" fill="#fff" stroke="#c13ee0" stroke-width="1.7"/><circle cx="818.68" cy="339.59" r="2.6" fill="#fff" stroke="#c13ee0" stroke-width="1.7"/><circle cx="846.76" cy="339.59" r="2.6" fill="#fff" stroke="#c13ee0" stroke-width="1.7"/><circle cx="874.85" cy="339.59" r="2.6" fill="#fff" stroke="#c13ee0" stroke-width="1.7"/><circle cx="902.93" cy="339.59" r="2.6" fill="#fff" stroke="#c13ee0" stroke-width="1.7"/><circle cx="931.01" cy="337.34" r="2.6" fill="#fff" stroke="#c13ee0" stroke-width="1.7"/><circle cx="959.10" cy="337.34" r="2.6" fill="#fff" stroke="#c13ee0" stroke-width="1.7"/><circle cx="987.18" cy="337.34" r="2.6" fill="#fff" stroke="#c13ee0" stroke-width="1.7"/><circle cx="1015.26" cy="337.34" r="2.6" fill="#fff" stroke="#c13ee0" stroke-width="1.7"/><circle cx="1043.35" cy="337.34" r="2.6" fill="#fff" stroke="#c13ee0" stroke-width="1.7"/><circle cx="1071.43" cy="337.34" r="2.6" fill="#fff" stroke="#c13ee0" stroke-width="1.7"/><circle cx="1099.52" cy="337.34" r="2.6" fill="#fff" stroke="#c13ee0" stroke-width="1.7"/><circle cx="1127.60" cy="332.83" r="2.6" fill="#fff" stroke="#c13ee0" stroke-width="1.7"/><circle cx="1155.68" cy="332.83" r="2.6" fill="#fff" stroke="#c13ee0" stroke-width="1.7"/><circle cx="1183.77" cy="332.83" r="2.6" fill="#fff" stroke="#c13ee0" stroke-width="1.7"/><circle cx="1211.85" cy="332.83" r="2.6" fill="#fff" stroke="#c13ee0" stroke-width="1.7"/><circle cx="1239.94" cy="332.83" r="2.6" fill="#fff" stroke="#c13ee0" stroke-width="1.7"/><circle cx="1268.02" cy="330.58" r="2.6" fill="#fff" stroke="#c13ee0" stroke-width="1.7"/><circle cx="1296.10" cy="330.58" r="2.6" fill="#fff" stroke="#c13ee0" stroke-width="1.7"/><circle cx="1324.19" cy="330.58" r="2.6" fill="#fff" stroke="#c13ee0" stroke-width="1.7"/><circle cx="1352.27" cy="330.58" r="2.6" fill="#fff" stroke="#c13ee0" stroke-width="1.7"/><circle cx="1380.35" cy="330.58" r="2.6" fill="#fff" stroke="#c13ee0" stroke-width="1.7"/><circle cx="1408.44" cy="330.58" r="2.6" fill="#fff" stroke="#c13ee0" stroke-width="1.7"/><circle cx="1436.52" cy="330.58" r="2.6" fill="#fff" stroke="#c13ee0" stroke-width="1.7"/><circle cx="1464.61" cy="330.58" r="2.6" fill="#fff" stroke="#c13ee0" stroke-width="1.7"/><circle cx="1492.69" cy="330.58" r="2.6" fill="#fff" stroke="#c13ee0" stroke-width="1.7"/><circle cx="1520.77" cy="330.58" r="2.6" fill="#fff" stroke="#c13ee0" stroke-width="1.7"/><circle cx="1548.86" cy="330.58" r="2.6" fill="#fff" stroke="#c13ee0" stroke-width="1.7"/>
<path d="M1062.1 249.85 H1087.3" stroke="#c13ee0" stroke-width="2.2"/>
<circle cx="1074.7" cy="249.85" r="5.2" fill="#fff" stroke="#c13ee0" stroke-width="2.2"/>
</svg>
<div class="t" style="left:1092.90px;top:243.21px;font-size:12.5px;line-height:12.5px;color:#333;transform:scaleX(0.9632);">Riesgos</div>
<div class="a" style="left:630px;top:665px;width:937px;height:103.7px;background:#f9fafb;border-radius:12px 12px 0 12px"></div>
<div class="t" style="left:648.00px;top:677.64px;font-size:11.046511627906977px;line-height:11.046511627906977px;color:#9a9a9a;transform:scaleX(0.9244);">Módulos</div>
<div class="a" style="left:648px;top:716px;width:15.9px;height:15.4px;background:#c24ee2;border-radius:3px"></div>
<div class="t" style="left:673.30px;top:716.90px;font-size:14.171511627906979px;line-height:14.171511627906979px;color:#222;transform:scaleX(0.9590);-webkit-text-stroke:0.2px #222;">Riesgos</div>
<div class="t" style="left:673.30px;top:738.43px;font-size:11.773255813953488px;line-height:11.773255813953488px;color:#4f9876;transform:scaleX(1.0187);">Por conteo</div>
<div class="a" style="left:816px;top:665px;width:1px;height:98px;background:#ececec"></div>
<div class="a" style="left:817px;top:763px;width:750px;height:1px;background:#ececec"></div>
<div class="a" style="left:817px;top:763.6px;width:545.5px;height:5px;background:#d9d9d9;border-radius:2.5px"></div>
<div class="a" style="left:817px;top:665px;width:750px;height:98px;overflow:hidden"><svg style="left:-817px;top:-665px" width="1600" height="800" font-family="Liberation Sans"><text x="834.2" y="686" text-anchor="middle" font-size="10.5" fill="#9a9a9a">17-</text><text x="834.2" y="698" text-anchor="middle" font-size="10.5" fill="#9a9a9a">Sep</text><text x="834.2" y="746.8" text-anchor="middle" font-size="14.3" fill="#333">102</text><text x="867.5" y="686" text-anchor="middle" font-size="10.5" fill="#9a9a9a">18-</text><text x="867.5" y="698" text-anchor="middle" font-size="10.5" fill="#9a9a9a">Sep</text><text x="867.5" y="746.8" text-anchor="middle" font-size="14.3" fill="#333">102</text><text x="900.9" y="686" text-anchor="middle" font-size="10.5" fill="#9a9a9a">19-</text><text x="900.9" y="698" text-anchor="middle" font-size="10.5" fill="#9a9a9a">Sep</text><text x="900.9" y="746.8" text-anchor="middle" font-size="14.3" fill="#333">102</text><text x="934.2" y="686" text-anchor="middle" font-size="10.5" fill="#9a9a9a">20-</text><text x="934.2" y="698" text-anchor="middle" font-size="10.5" fill="#9a9a9a">Sep</text><text x="934.2" y="746.8" text-anchor="middle" font-size="14.3" fill="#333">102</text><text x="967.5" y="686" text-anchor="middle" font-size="10.5" fill="#9a9a9a">21-</text><text x="967.5" y="698" text-anchor="middle" font-size="10.5" fill="#9a9a9a">Sep</text><text x="967.5" y="746.8" text-anchor="middle" font-size="14.3" fill="#333">102</text><text x="1000.9" y="686" text-anchor="middle" font-size="10.5" fill="#9a9a9a">22-</text><text x="1000.9" y="698" text-anchor="middle" font-size="10.5" fill="#9a9a9a">Sep</text><text x="1000.9" y="746.8" text-anchor="middle" font-size="14.3" fill="#333">102</text><text x="1034.2" y="686" text-anchor="middle" font-size="10.5" fill="#9a9a9a">23-</text><text x="1034.2" y="698" text-anchor="middle" font-size="10.5" fill="#9a9a9a">Sep</text><text x="1034.2" y="746.8" text-anchor="middle" font-size="14.3" fill="#333">102</text><text x="1067.5" y="686" text-anchor="middle" font-size="10.5" fill="#9a9a9a">24-</text><text x="1067.5" y="698" text-anchor="middle" font-size="10.5" fill="#9a9a9a">Sep</text><text x="1067.5" y="746.8" text-anchor="middle" font-size="14.3" fill="#333">102</text><text x="1100.8" y="686" text-anchor="middle" font-size="10.5" fill="#9a9a9a">25-</text><text x="1100.8" y="698" text-anchor="middle" font-size="10.5" fill="#9a9a9a">Sep</text><text x="1100.8" y="746.8" text-anchor="middle" font-size="14.3" fill="#333">103</text><text x="1134.2" y="686" text-anchor="middle" font-size="10.5" fill="#9a9a9a">26-</text><text x="1134.2" y="698" text-anchor="middle" font-size="10.5" fill="#9a9a9a">Sep</text><text x="1134.2" y="746.8" text-anchor="middle" font-size="14.3" fill="#333">103</text><text x="1167.5" y="686" text-anchor="middle" font-size="10.5" fill="#9a9a9a">27-</text><text x="1167.5" y="698" text-anchor="middle" font-size="10.5" fill="#9a9a9a">Sep</text><text x="1167.5" y="746.8" text-anchor="middle" font-size="14.3" fill="#333">103</text><text x="1200.8" y="686" text-anchor="middle" font-size="10.5" fill="#9a9a9a">28-</text><text x="1200.8" y="698" text-anchor="middle" font-size="10.5" fill="#9a9a9a">Sep</text><text x="1200.8" y="746.8" text-anchor="middle" font-size="14.3" fill="#333">103</text><text x="1234.2" y="686" text-anchor="middle" font-size="10.5" fill="#9a9a9a">29-</text><text x="1234.2" y="698" text-anchor="middle" font-size="10.5" fill="#9a9a9a">Sep</text><text x="1234.2" y="746.8" text-anchor="middle" font-size="14.3" fill="#333">103</text><text x="1267.5" y="686" text-anchor="middle" font-size="10.5" fill="#9a9a9a">30-</text><text x="1267.5" y="698" text-anchor="middle" font-size="10.5" fill="#9a9a9a">Sep</text><text x="1267.5" y="746.8" text-anchor="middle" font-size="14.3" fill="#333">103</text><text x="1300.8" y="686" text-anchor="middle" font-size="10.5" fill="#9a9a9a">01-</text><text x="1300.8" y="698" text-anchor="middle" font-size="10.5" fill="#9a9a9a">Oct</text><text x="1300.8" y="746.8" text-anchor="middle" font-size="14.3" fill="#333">103</text><text x="1334.2" y="686" text-anchor="middle" font-size="10.5" fill="#9a9a9a">02-</text><text x="1334.2" y="698" text-anchor="middle" font-size="10.5" fill="#9a9a9a">Oct</text><text x="1334.2" y="746.8" text-anchor="middle" font-size="14.3" fill="#333">105</text><text x="1367.5" y="686" text-anchor="middle" font-size="10.5" fill="#9a9a9a">03-</text><text x="1367.5" y="698" text-anchor="middle" font-size="10.5" fill="#9a9a9a">Oct</text><text x="1367.5" y="746.8" text-anchor="middle" font-size="14.3" fill="#333">105</text><text x="1400.8" y="686" text-anchor="middle" font-size="10.5" fill="#9a9a9a">04-</text><text x="1400.8" y="698" text-anchor="middle" font-size="10.5" fill="#9a9a9a">Oct</text><text x="1400.8" y="746.8" text-anchor="middle" font-size="14.3" fill="#333">105</text><text x="1434.1" y="686" text-anchor="middle" font-size="10.5" fill="#9a9a9a">05-</text><text x="1434.1" y="698" text-anchor="middle" font-size="10.5" fill="#9a9a9a">Oct</text><text x="1434.1" y="746.8" text-anchor="middle" font-size="14.3" fill="#333">105</text><text x="1467.5" y="686" text-anchor="middle" font-size="10.5" fill="#9a9a9a">06-</text><text x="1467.5" y="698" text-anchor="middle" font-size="10.5" fill="#9a9a9a">Oct</text><text x="1467.5" y="746.8" text-anchor="middle" font-size="14.3" fill="#333">105</text><text x="1500.8" y="686" text-anchor="middle" font-size="10.5" fill="#9a9a9a">07-</text><text x="1500.8" y="698" text-anchor="middle" font-size="10.5" fill="#9a9a9a">Oct</text><text x="1500.8" y="746.8" text-anchor="middle" font-size="14.3" fill="#333">106</text><text x="1534.1" y="686" text-anchor="middle" font-size="10.5" fill="#9a9a9a">08-</text><text x="1534.1" y="698" text-anchor="middle" font-size="10.5" fill="#9a9a9a">Oct</text><text x="1534.1" y="746.8" text-anchor="middle" font-size="14.3" fill="#333">106</text><text x="1567.5" y="686" text-anchor="middle" font-size="10.5" fill="#9a9a9a">09-</text><text x="1567.5" y="698" text-anchor="middle" font-size="10.5" fill="#9a9a9a">Oct</text><text x="1567.5" y="746.8" text-anchor="middle" font-size="14.3" fill="#333">106</text></svg></div>
<div class="a" style="left:1054px;top:145.3px;width:262.6px;height:48.2px;background:#fff;border-radius:8px;box-shadow:0 4px 14px rgba(0,0,0,0.12)"></div>
<div class="t" style="left:1071.00px;top:164.16px;font-size:12.209302325581397px;line-height:12.209302325581397px;color:#333;letter-spacing:-0.451px;">.PNG</div>
<div class="a" style="left:1326.7px;top:144.4px;width:261.9px;height:97.5px;background:#fff;border-radius:2px 2px 9px 9px;box-shadow:0 4px 16px rgba(0,0,0,0.13);overflow:hidden"><div style="position:absolute;left:0;top:0;width:100%;height:49px;background:#f4f4f4"></div></div>
<div class="t" style="left:1375.10px;top:163.58px;font-size:12.063953488372094px;line-height:12.063953488372094px;color:#333;letter-spacing:0.269px;">Descargar</div>
<div class="t" style="left:1375.10px;top:211.88px;font-size:12.063953488372094px;line-height:12.063953488372094px;color:#333;letter-spacing:0.463px;">Configuración de formatos</div>
<svg style="left:0;top:0" width="1600" height="300">
<g fill="none" stroke="#2e7d5b" stroke-width="2" stroke-linecap="round" stroke-linejoin="round">
<path d="M1354.6 161.6 V171 M1350.4 167 L1354.6 171.2 L1358.8 167"/>
<path d="M1347.2 171.6 V175.8 H1362 V171.6"/>
<path d="M1557.4 164.6 L1562.6 169.4 L1557.4 174.2"/>
<path d="M1352 226.4 H1346.6 A1.4 1.4 0 0 1 1345.2 225 V210.6 A1.4 1.4 0 0 1 1346.6 209.2 H1360.6 A1.4 1.4 0 0 1 1362 210.6 V215"/>
</g>
<g fill="#fff" stroke="#2e7d5b" stroke-width="1.7" stroke-linejoin="round">
<path d="M1354.94,214.39 L1355.29,212.24 L1358.11,212.24 L1358.46,214.39 L1360.24,215.42 L1362.28,214.65 L1363.70,217.09 L1362.00,218.47 L1362.00,220.53 L1363.70,221.91 L1362.28,224.35 L1360.24,223.58 L1358.46,224.61 L1358.11,226.76 L1355.29,226.76 L1354.94,224.61 L1353.16,223.58 L1351.12,224.35 L1349.70,221.91 L1351.40,220.53 L1351.40,218.47 L1349.70,217.09 L1351.12,214.65 L1353.16,215.42 Z"/>
<circle cx="1356.7" cy="219.5" r="2.1"/>
</g>
</svg>
</body></html>
